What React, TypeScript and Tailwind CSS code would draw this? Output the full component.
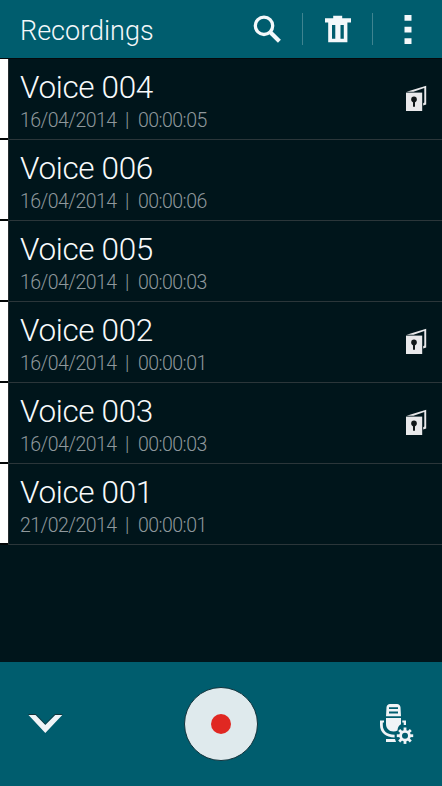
interface Recording {
  name: string;
  date: string;
  duration: string;
  locked: boolean;
}

const recordings: Recording[] = [
  { name: "Voice 004", date: "16/04/2014", duration: "00:00:05", locked: true },
  { name: "Voice 006", date: "16/04/2014", duration: "00:00:06", locked: false },
  { name: "Voice 005", date: "16/04/2014", duration: "00:00:03", locked: false },
  { name: "Voice 002", date: "16/04/2014", duration: "00:00:01", locked: true },
  { name: "Voice 003", date: "16/04/2014", duration: "00:00:03", locked: true },
  { name: "Voice 001", date: "21/02/2014", duration: "00:00:01", locked: false },
];

const gearAngles = [0, 45, 90, 135, 180, 225, 270, 315];

function SearchIcon() {
  return (
    <svg width="30" height="30" viewBox="0 0 30 30" fill="none" stroke="#f4f8fa">
      <circle cx="12" cy="11.8" r="8.7" strokeWidth="3.3" />
      <path d="M18.3 18.3L27.4 27.2" strokeWidth="4.2" />
    </svg>
  );
}

function TrashIcon() {
  return (
    <svg width="28" height="30" viewBox="0 0 28 30" fill="#f4f8fa">
      <path
        d="M1 4.3H9.2V1.8H18.2V4.3H27V8.5H23.4V28.3H4.2V8.5H1ZM8 11V24.7H11.3V11ZM16.5 11V24.7H19.8V11Z"
        fillRule="evenodd"
      />
    </svg>
  );
}

function MoreIcon() {
  return (
    <svg width="8" height="30" viewBox="0 0 8 30" fill="#f4f8fa">
      <path d="M.5 1H7.5V6.7H.5ZM.5 12.7H7.5V18.5H.5ZM.5 24.2H7.5V30H.5Z" />
    </svg>
  );
}

function PrivateIcon() {
  return (
    <svg width="22" height="28" viewBox="0 0 22 28" fill="#e9e9eb">
      <path d="M1.6 6.8L21.2 .8V19.4L18.2 20.6V18.2L19.3 17.6V3L8.5 6.8Z" />
      <path d="M1 7.6H17.2V26H1Z" />
      <circle cx="9" cy="14.4" r="2.8" fill="#101618" />
      <path d="M8 15H10V21.7H8Z" fill="#101618" />
    </svg>
  );
}

function MicSettingsIcon() {
  return (
    <svg width="36" height="42" viewBox="0 0 36 42" fill="#f0f4f7">
      <path
        d="M10 1H17C19 1 20.3 2.3 20.5 4.2L21 13.2H6L6.5 4.2C6.7 2.3 8 1 10 1ZM9 4.2V6H18V4.2ZM9 8.6V10.4H18V8.6Z"
        fillRule="evenodd"
      />
      <path d="M6 15H21V21.3C18.2 22.9 17.7 25 17.5 27.6Q15.8 28.5 13.5 28.5C9 28.5 6 25.3 6 21Z" />
      <path d="M0 17.5H4V19.5H2.8V22C2.8 28.1 7 31.7 14.6 31.7V34.4C5.8 34.4 0 29.6 0 22ZM22.3 17.5H26V22H23.7V19.5H22.3Z" />
      <path d="M6 36H15L16 39H6Z" />
      <g transform="translate(25 32.7)">
        <circle r="4.4" fill="none" stroke="#f0f4f7" strokeWidth="2.8" />
        {gearAngles.map((angle) => (
          <path key={angle} d="M-1.4 -8.2H1.4V-5H-1.4Z" transform={`rotate(${angle})`} />
        ))}
      </g>
    </svg>
  );
}

function RecordingRow({ recording }: { recording: Recording }) {
  return (
    <li className="flex h-[81px]">
      <div className="w-2 border-b-2 border-[#020607] bg-white" />
      <div className="flex flex-1 items-start justify-between border-b border-l border-b-[#2b363a] border-l-[#252c2f] pl-[11px] pr-[15px]">
        <div>
          <h2 className="mt-[11px] text-[31.5px] leading-9 font-light tracking-[-0.35px] text-[#f8fafb]">
            {recording.name}
          </h2>
          <p className="mt-[3px] flex text-[19.5px] leading-6 font-light tracking-[-0.55px] text-[#8f989c]">
            <span className="w-[96px]">{recording.date}</span>
            <span className="w-[22px] text-center">|</span>
            <span>{recording.duration}</span>
          </p>
        </div>
        {recording.locked && (
          <div className="mt-[26px]">
            <PrivateIcon />
          </div>
        )}
      </div>
    </li>
  );
}

export default function App() {
  return (
    <div className="flex h-[786px] w-[442px] flex-col overflow-hidden bg-[#00151b] font-['Roboto',sans-serif]">
      <header className="flex h-[59px] items-start border-b border-[#05090b] bg-[#005d6e]">
        <h1 className="mt-[13px] flex-1 pl-[20px] text-[27px] leading-9 font-light text-[#f4f8fa]">
          Recordings
        </h1>
        <button className="flex h-[58px] w-[70px] items-center justify-center">
          <SearchIcon />
        </button>
        <div className="mt-[13px] h-8 w-px bg-[#3f8490]" />
        <button className="flex h-[58px] w-[69px] items-center justify-center">
          <TrashIcon />
        </button>
        <div className="mt-[13px] h-8 w-px bg-[#3f8490]" />
        <button className="flex h-[58px] w-[69px] items-center justify-center">
          <MoreIcon />
        </button>
      </header>

      <ul className="flex-1">
        {recordings.map((recording) => (
          <RecordingRow key={recording.name} recording={recording} />
        ))}
      </ul>

      <footer className="flex h-[124px] items-center bg-[#005d6e] px-[26px]">
        <div className="flex-1">
          <button className="ml-0.5 block">
            <svg width="35" height="20" viewBox="0 0 35 20">
              <path d="M.5 .5H8L17.3 10.3L26.8 .5H34.3" fill="none" stroke="#14333b" />
              <path d="M.5 1H7.5L17.3 11L27.3 1H34.3L17.3 19Z" fill="#f0f4f7" />
            </svg>
          </button>
        </div>
        <button className="mb-px flex size-[74px] items-center justify-center rounded-full border border-[#12343d] bg-[#dfeaed]">
          <span className="size-5 rounded-full bg-[#e02822]" />
        </button>
        <div className="flex flex-1 justify-end">
          <button>
            <MicSettingsIcon />
          </button>
        </div>
      </footer>
    </div>
  );
}
